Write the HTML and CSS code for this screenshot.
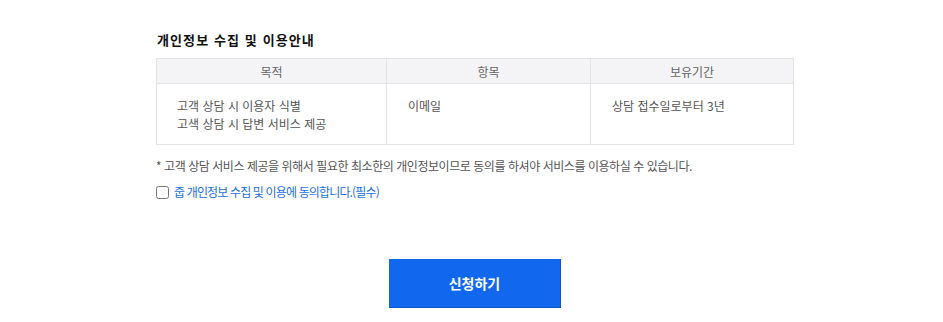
FILE: index.html
```html
<!DOCTYPE html>
<html lang="ko">

<head>
    <meta charset="utf-8">
    <title>개인정보 수집 및 이용안내</title>
    <link rel="stylesheet" href="styles.css">
</head>

<body>
    <div class="container">
        <h3 class="agree-title">개인정보 수집 및 이용안내</h3>

        <!--수집 항목 표-->
        <table class="agree-table">
            <colgroup>
                <col class="col-purpose">
                <col class="col-item">
                <col class="col-period">
            </colgroup>
            <thead>
                <tr>
                    <th>목적</th>
                    <th>항목</th>
                    <th>보유기간</th>
                </tr>
            </thead>
            <tbody>
                <tr>
                    <td>고객 상담 시 이용자 식별<br>고색 상담 시 답변 서비스 제공</td>
                    <td>이메일</td>
                    <td>상담 접수일로부터 3년</td>
                </tr>
            </tbody>
        </table>

        <p class="agree-note">* 고객 상담 서비스 제공을 위해서 필요한 최소한의 개인정보이므로 동의를 하셔야 서비스를 이용하실 수 있습니다.</p>

        <div class="agree-check">
            <input type="checkbox" id="agree">
            <label for="agree">줍 개인정보 수집 및 이용에 동의합니다.(필수)</label>
        </div>

        <div class="btn-area">
            <button type="button" class="btn-submit">신청하기</button>
        </div>
    </div>
</body>

</html>
```

FILE: styles.css
```css
/*Page*/
body {
    margin: 0;
    background: #fff;
    font-family: "Noto Sans CJK KR", "Noto Sans", sans-serif;
    color: #555;
}

div.container {
    width: 638px;
    margin-left: 156px;
    padding-top: 30px;
}

h3.agree-title {
    margin: 0 0 9px 1px;
    font-size: 13px;
    line-height: 19px;
    font-weight: bold;
    color: #111;
    letter-spacing: 1.1px;
}

/*Table*/
table.agree-table {
    width: 100%;
    border-collapse: collapse;
    table-layout: fixed;
    font-size: 12px;
}

col.col-purpose {
    width: 230px;
}

col.col-item {
    width: 204px;
}

table.agree-table th,
table.agree-table td {
    border: 1px solid #e3e3e3;
}

table.agree-table th {
    height: 24px;
    padding: 0;
    background: #f4f4f6;
    font-weight: normal;
    color: #666;
    text-align: center;
}

table.agree-table td {
    height: 47px;
    padding: 13px 20px 0 20px;
    vertical-align: top;
    line-height: 18px;
    color: #555;
}

table.agree-table td + td {
    padding-left: 21px;
}

/*Notice and checkbox*/
p.agree-note {
    margin: 12px 0 0 0;
    font-size: 12px;
    line-height: 18px;
    letter-spacing: -0.45px;
    color: #555;
}

div.agree-check {
    display: flex;
    align-items: center;
    gap: 5px;
    margin-top: 8px;
}

div.agree-check input {
    margin: 0;
    width: 13px;
    height: 13px;
}

div.agree-check label {
    font-size: 12px;
    line-height: 18px;
    letter-spacing: -0.85px;
    color: #1a6fe0;
}

/*Button*/
div.btn-area {
    display: flex;
    justify-content: center;
    margin-top: 58px;
}

button.btn-submit {
    width: 172px;
    height: 49px;
    border: 0;
    border-right: 1px solid #0c57c4;
    border-bottom: 1px solid #0c57c4;
    background: #1168ee;
    color: #fff;
    font-family: "Noto Sans CJK KR", sans-serif;
    font-size: 14px;
    font-weight: bold;
}
```
